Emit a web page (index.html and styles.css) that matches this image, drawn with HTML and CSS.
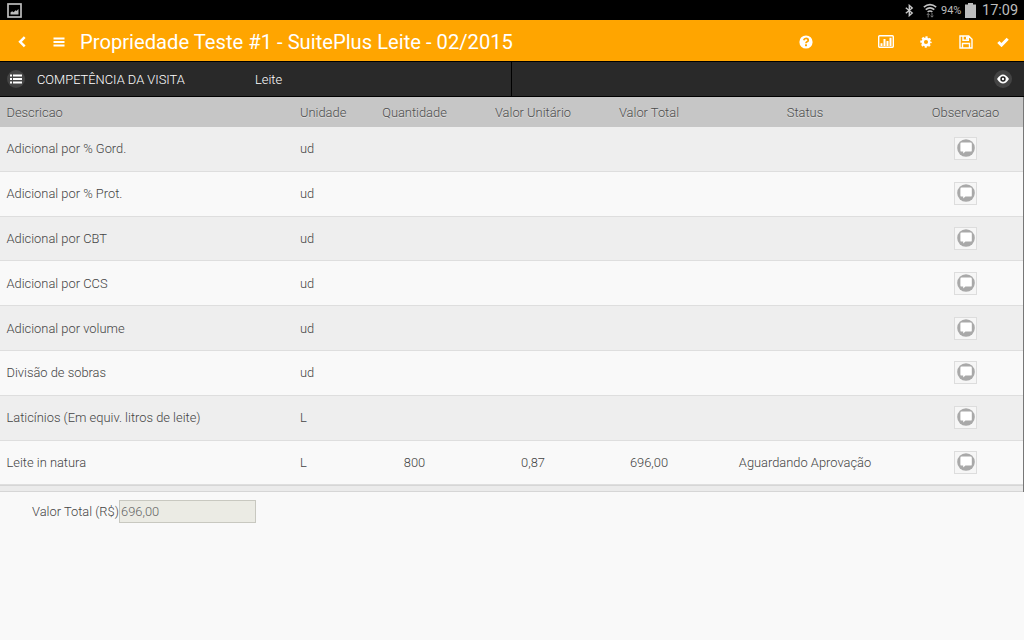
FILE: index.html
```html
<!DOCTYPE html>
<html lang="pt-BR">
<head>
  <meta charset="UTF-8" />
  <meta name="viewport" content="width=device-width, initial-scale=1.0"/>
  <title>SuitePlus Leite</title>
  <link rel="stylesheet" href="styles.css">
</head>
<body>
  <svg class="symbols">
    <symbol id="comment" viewBox="0 0 18 18">
      <circle cx="9" cy="9" r="8.8" fill="#a9a9a9"/>
      <path d="M4.600 3.600h9q1.200 0 1.200 1.200v6.600q0 1.200-1.200 1.200H8.400l-2.200 2v-2H4.600q-1.200 0-1.200-1.200V4.800q0-1.200 1.200-1.200z" fill="#fff"/>
    </symbol>
  </svg>

  <div class="statusbar">
    <svg class="picture" width="15" height="15" viewBox="0 0 15 15">
      <rect x="1" y="1" width="13" height="13" fill="none" stroke="#bdbdbd" stroke-width="1.7"/>
      <path d="M3.500 11.500V9.600l1.600-1.400 1.500 1 2-2 .9.8L11.500 6v5.500z" fill="#bdbdbd"/>
    </svg>
    <div class="status-icons">
      <svg class="bluetooth" width="9" height="13" viewBox="0 0 9 13"><path d="M.8 3.700L7.200 9 4.300 11.600V1.400L7.200 4 .8 9.300" fill="none" stroke="#c8c8c8" stroke-width="1.400"/></svg>
      <svg class="wifi" width="14" height="15" viewBox="0 0 14 15">
        <path d="M.8 4.200Q7-.8 13.200 4.200M2.700 6.600q4.300-3.400 8.600 0M4.600 8.900q2.400-1.700 4.800 0" fill="none" stroke="#c4c4c4" stroke-width="1.600"/>
        <path d="M5.200 14.500v-4M3.800 12l1.400-1.500L6.600 12M9 10v4M7.600 12.700L9 14.200l1.400-1.500" fill="none" stroke="#777"/>
      </svg>
      <span class="percent">94%</span>
      <svg class="battery" width="11" height="15" viewBox="0 0 11 15"><path d="M3 0h5v1.500H11V15H0V1.500h3z" fill="#bdbdbd"/></svg>
      <span class="clock">17:09</span>
    </div>
  </div>

  <div class="navbar">
    <svg class="back" width="8" height="12" viewBox="0 0 8 12"><path d="M6.700 1.200L2.100 5.800l4.600 4.600" fill="none" stroke="#fff" stroke-width="2.500"/></svg>
    <svg class="menu" width="12" height="10" viewBox="0 0 12 10"><path d="M.5 1.500h11M.5 5h11M.5 8.500h11" stroke="#fff" stroke-width="2"/></svg>
    <h1>Propriedade Teste #1 - SuitePlus Leite - 02/2015</h1>
    <div class="actions">
      <svg class="help" width="14" height="14" viewBox="0 0 14 14">
        <circle cx="7" cy="7" r="6.600" fill="#fff"/>
        <path d="M4.700 5.300Q5.200 3.400 7.100 3.400q2.100 0 2.100 1.800 0 1-1.200 1.600-1 .5-1 1.500" fill="none" stroke="#ffa500" stroke-width="1.800"/>
        <rect x="6" y="9.300" width="2" height="1.900" fill="#ffa500"/>
      </svg>
      <svg class="chart" width="16" height="13" viewBox="0 0 16 13">
        <rect x=".7" y=".7" width="14.600" height="11.600" rx="1" fill="none" stroke="#fff" stroke-width="1.400"/>
        <path d="M3.500 11V8.300M6.500 11V4M9.500 11V6M12.500 11V2.700" stroke="#fff" stroke-width="2"/>
      </svg>
      <svg class="gear" width="12" height="12" viewBox="0 0 12 12">
        <circle cx="6" cy="6" r="3.300" fill="none" stroke="#fff" stroke-width="2.500"/>
        <circle cx="6" cy="6" r="4.800" fill="none" stroke="#fff" stroke-width="1.800" stroke-dasharray="2.100 1.670" stroke-dashoffset="1.050"/>
      </svg>
      <svg class="save" width="14" height="14" viewBox="0 0 14 14">
        <path d="M1 1h8.700L13 4.300V13H1zM4 1v4.200h5.300V1M3.500 13V8.500h7V13" fill="none" stroke="#fff" stroke-width="1.400"/>
        <rect x="7" y="1.500" width="1.900" height="3" fill="#fff"/>
      </svg>
      <svg class="check" width="12" height="10" viewBox="0 0 12 10"><path d="M1.300 5l3.200 3.100L10.700 1.800" fill="none" stroke="#fff" stroke-width="3"/></svg>
    </div>
  </div>

  <div class="visit">
    <div class="visit-info">
      <span class="round">
        <svg width="12" height="10" viewBox="0 0 12 10"><path d="M0 1.500h2M3 1.500H12M0 5h2M3 5H12M0 8.500h2M3 8.500H12" stroke="#fff" stroke-width="1.800"/></svg>
      </span>
      <span class="visit-label">COMPETÊNCIA DA VISITA</span>
      <span class="visit-value">Leite</span>
    </div>
    <div class="visit-view">
      <span class="round">
        <svg width="12" height="10" viewBox="0 0 12 10">
          <path d="M0 5Q6-4 12 5 6 14 0 5z" fill="#fff"/>
          <circle cx="6" cy="5" r="2.700" fill="#222"/>
          <circle cx="6" cy="5" r="1.200" fill="#fff"/>
        </svg>
      </span>
    </div>
  </div>

  <div class="table">
    <div class="row head">
      <span>Descricao</span><span>Unidade</span><span>Quantidade</span><span>Valor Unitário</span><span>Valor Total</span><span>Status</span><span>Observacao</span>
    </div>
    <div class="row">
      <span>Adicional por % Gord.</span><span>ud</span><span></span><span></span><span></span><span></span>
      <span><button class="obs"><svg><use href="#comment"/></svg></button></span>
    </div>
    <div class="row">
      <span>Adicional por % Prot.</span><span>ud</span><span></span><span></span><span></span><span></span>
      <span><button class="obs"><svg><use href="#comment"/></svg></button></span>
    </div>
    <div class="row">
      <span>Adicional por CBT</span><span>ud</span><span></span><span></span><span></span><span></span>
      <span><button class="obs"><svg><use href="#comment"/></svg></button></span>
    </div>
    <div class="row">
      <span>Adicional por CCS</span><span>ud</span><span></span><span></span><span></span><span></span>
      <span><button class="obs"><svg><use href="#comment"/></svg></button></span>
    </div>
    <div class="row">
      <span>Adicional por volume</span><span>ud</span><span></span><span></span><span></span><span></span>
      <span><button class="obs"><svg><use href="#comment"/></svg></button></span>
    </div>
    <div class="row">
      <span>Divisão de sobras</span><span>ud</span><span></span><span></span><span></span><span></span>
      <span><button class="obs"><svg><use href="#comment"/></svg></button></span>
    </div>
    <div class="row">
      <span>Laticínios (Em equiv. litros de leite)</span><span>L</span><span></span><span></span><span></span><span></span>
      <span><button class="obs"><svg><use href="#comment"/></svg></button></span>
    </div>
    <div class="row">
      <span>Leite in natura</span><span>L</span><span>800</span><span>0,87</span><span>696,00</span><span>Aguardando Aprovação</span>
      <span><button class="obs"><svg><use href="#comment"/></svg></button></span>
    </div>
    <div class="table-end"></div>
  </div>

  <div class="total">
    <label for="total">Valor Total (R$)</label>
    <input type="text" id="total" value="696,00" readonly />
  </div>
</body>
</html>
```
FILE: styles.css
```css
* {
  box-sizing: border-box;
}

body {
  font-family: Roboto, sans-serif;
  font-size: 12.88px;
  font-weight: 300;
  background: #f9f9f9;
  color: #444;
  margin: 0;
  height: 640px;
  overflow: hidden;
}

svg {
  display: block;
  flex: none;
}

.symbols {
  display: none;
}

.statusbar {
  display: flex;
  justify-content: space-between;
  align-items: center;
  height: 20px;
  padding: 0 7px;
  background: #000;
  color: #bdbdbd;
}

.status-icons {
  display: flex;
  align-items: center;
}

.wifi {
  margin: 0 4px 0 9px;
}

.percent {
  font-size: 11px;
  font-weight: 400;
  width: 24px;
}

.battery {
  margin-right: 6px;
}

.clock {
  font-size: 14.5px;
  font-weight: 400;
  width: 35px;
  padding-top: 1px;
}

.navbar {
  display: flex;
  align-items: center;
  height: 41px;
  padding: 2px 15px 0 18px;
  background: #ffa500;
}

.menu {
  margin: 0 15px 0 27px;
}

.navbar h1 {
  font-size: 20.2px;
  font-weight: 400;
  line-height: 24px;
  color: #fff;
  margin: 0;
}

.actions {
  display: flex;
  align-items: center;
  margin-left: auto;
}

.help {
  margin-right: 65px;
}

.chart {
  margin-right: 26px;
}

.gear {
  margin-right: 27px;
}

.save {
  margin-right: 24px;
}

.visit {
  display: flex;
  height: 36px;
  background: #292929;
  border-top: 1px solid #000;
  border-bottom: 1px solid #000;
  color: #fff;
}

.visit-info {
  display: flex;
  align-items: center;
  width: 512px;
  padding-left: 7px;
  border-right: 1px solid #000;
}

.visit-label {
  width: 218px;
  margin-left: 12px;
}

.visit-view {
  display: flex;
  flex: 1;
  justify-content: flex-end;
  align-items: center;
  padding-right: 12px;
}

.round {
  display: flex;
  justify-content: center;
  align-items: center;
  width: 18px;
  height: 18px;
  border-radius: 50%;
  background: #444;
}

.table {
  border-right: 1px solid #777;
}

.row {
  display: grid;
  grid-template-columns: 293.5px 59px 111px 126px 106px 206px 115px;
  align-items: center;
  height: 44.8px;
  padding-left: 6.5px;
  background: #f9f9f9;
  border-bottom: 1px solid #dedede;
  text-align: center;
}

.row:nth-child(even) {
  background: #eee;
}

.row span:nth-child(-n+2) {
  text-align: left;
}

.row.head {
  height: 30px;
  background: #c6c6c6;
  border-bottom: none;
  color: #4c4c4c;
  text-shadow: 0 1px 0 #ddd;
}

.obs {
  display: flex;
  justify-content: center;
  align-items: center;
  width: 23px;
  height: 23px;
  margin: 0 auto;
  padding: 0 0 1px;
  background: #f6f6f6;
  border: 1px solid #ddd;
}

.obs svg {
  width: 18px;
  height: 18px;
}

.table-end {
  height: 6.6px;
  background: #ebebeb;
  border-top: 1px solid #d6d6d6;
  border-bottom: 1px solid #d6d6d6;
}

/* Total geral */
.total {
  display: flex;
  align-items: center;
  padding: 8px 0 0 32px;
}

.total label {
  width: 87px;
  white-space: nowrap;
}

.total input {
  width: 137px;
  height: 23px;
  padding: 0 1px;
  font: inherit;
  color: #666;
  background: #ebebe4;
  border: 1px solid #c8c8c0;
}
```
